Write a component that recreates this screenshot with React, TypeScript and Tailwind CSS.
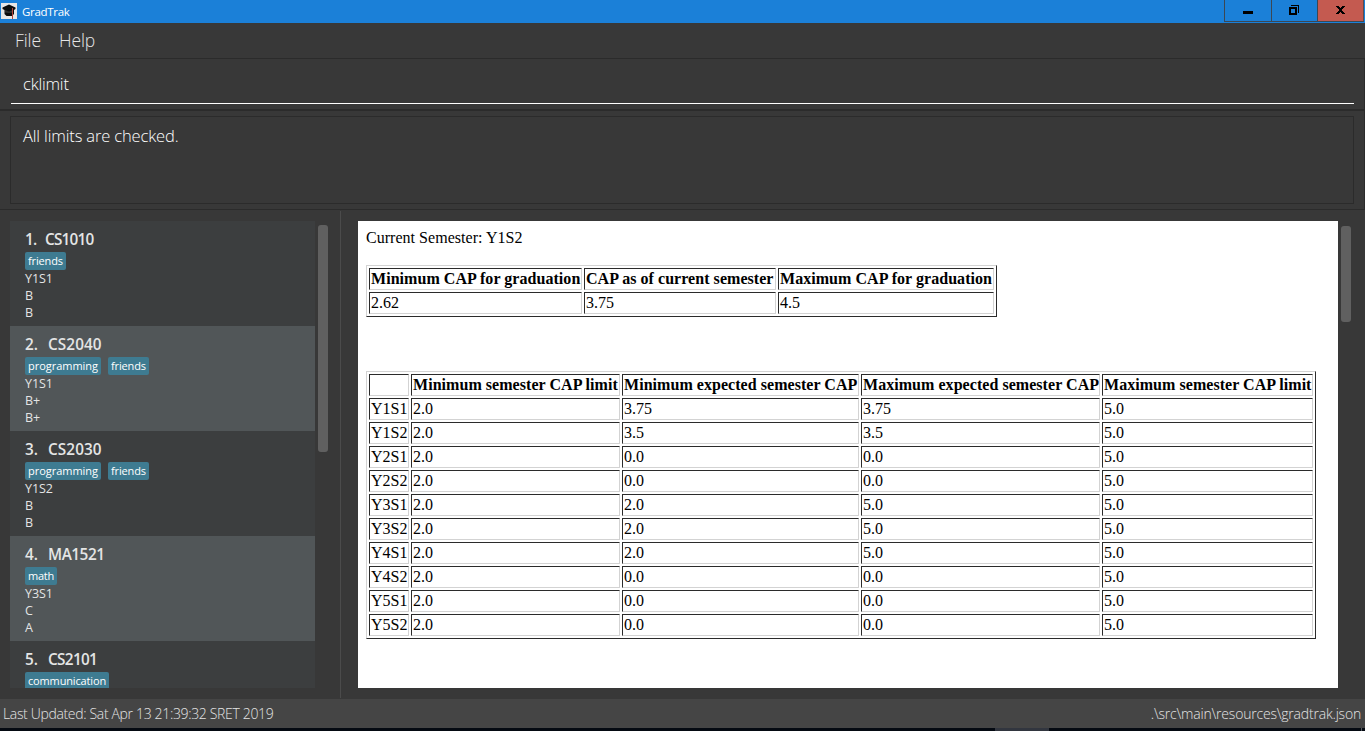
import React from "react";

type Module = { code: string; tags: string[]; lines: string[]; fit: string };

const modules: Module[] = [
  { code: "CS1010", tags: ["friends"], lines: ["Y1S1", "B", "B"], fit: "tracking-[-0.75px]" },
  { code: "CS2040", tags: ["programming", "friends"], lines: ["Y1S1", "B+", "B+"], fit: "tracking-[0.1px]" },
  { code: "CS2030", tags: ["programming", "friends"], lines: ["Y1S2", "B", "B"], fit: "tracking-[0.1px]" },
  { code: "MA1521", tags: ["math"], lines: ["Y3S1", "C", "A"], fit: "tracking-[-0.45px]" },
  { code: "CS2101", tags: ["communication"], lines: [], fit: "tracking-[-0.65px]" },
];

const tagFit: Record<string, string> = {
  friends: "w-[41px] tracking-[-0.14px]",
  programming: "w-[76px] tracking-[-0.03px]",
  math: "w-[32px] tracking-[-0.25px]",
  communication: "w-[84px] tracking-[-0.15px]",
};

const summaryHead = ["Minimum CAP for graduation", "CAP as of current semester", "Maximum CAP for graduation"];
const limitHead = [
  "",
  "Minimum semester CAP limit",
  "Minimum expected semester CAP",
  "Maximum expected semester CAP",
  "Maximum semester CAP limit",
];
const limitRows = [
  ["Y1S1", "2.0", "3.75", "3.75", "5.0"],
  ["Y1S2", "2.0", "3.5", "3.5", "5.0"],
  ["Y2S1", "2.0", "0.0", "0.0", "5.0"],
  ["Y2S2", "2.0", "0.0", "0.0", "5.0"],
  ["Y3S1", "2.0", "2.0", "5.0", "5.0"],
  ["Y3S2", "2.0", "2.0", "5.0", "5.0"],
  ["Y4S1", "2.0", "2.0", "5.0", "5.0"],
  ["Y4S2", "2.0", "0.0", "0.0", "5.0"],
  ["Y5S1", "2.0", "0.0", "0.0", "5.0"],
  ["Y5S2", "2.0", "0.0", "0.0", "5.0"],
];

const cell =
  "h-[22px] border border-t-[#2b2b2b] border-l-[#2b2b2b] border-r-[#d3d3d3] border-b-[#d3d3d3] p-px text-left leading-[18px] whitespace-nowrap";
const tableFrame =
  "table-fixed border-separate border-spacing-[2px] border border-t-[#d3d3d3] border-l-[#d3d3d3] border-r-[#2b2b2b] border-b-[#2b2b2b]";

function DataTable({ head, rows, cols, size }: { head: string[]; rows: string[][]; cols: string[]; size: string }) {
  return (
    <table className={`${tableFrame} ${size}`}>
      <colgroup>
        {cols.map((c, i) => (
          <col key={i} className={c} />
        ))}
      </colgroup>
      <tbody>
        <tr>
          {head.map((h, i) => (
            <th key={i} className={`${cell} font-bold tracking-[0.045px]`}>{h}</th>
          ))}
        </tr>
        {rows.map((r, i) => (
          <tr key={i}>
            {r.map((c, j) => (
              <td key={j} className={cell}>{c}</td>
            ))}
          </tr>
        ))}
      </tbody>
    </table>
  );
}

function TitleBar() {
  return (
    <header className="flex h-[23px] shrink-0 bg-[#1b80d8]">
      <svg className="mt-[3px] ml-px h-4 w-4" viewBox="0 0 16 16">
        <rect width="16" height="16" fill="#e8e6e6" />
        <path d="M8 1.5 L14.5 4.5 L14.5 6 L13 7 V11 L11 13 H5.5 L3.5 11 V7 L1.5 6 V4.5 Z" fill="#0c0c0c" />
        <path d="M4 7 L8 8.5 L12 7 V9.5 L8 10 L4 9.5Z" fill="#303030" />
        <path d="M11.5 5 V16" stroke="#b5453c" strokeWidth="1" />
      </svg>
      <span className="ml-[5px] text-[11.5px] leading-[24px] tracking-[-0.3px] text-white">GradTrak</span>
      <div className="mr-px ml-auto flex h-[22px] border-b border-l border-[#3b4754]">
        <div className="w-[47px] border-r border-[#3b4754]">
          <svg className="h-[21px] w-[46px]" viewBox="0 0 46 21" shapeRendering="crispEdges">
            <rect x="18" y="11" width="10" height="3" />
          </svg>
        </div>
        <div className="w-[46px] border-r border-[#3b4754]">
          <svg className="h-[21px] w-[45px]" viewBox="0 0 45 21" shapeRendering="crispEdges">
            <path d="M17 7h8v8h-8z M19 9v4h4v-4z" fillRule="evenodd" />
            <path d="M19 5h8v8h-1v-7h-7z" />
          </svg>
        </div>
        <div className="w-[46px] border-r border-[#5f4a4d] bg-[#c45a50]">
          <svg className="h-[21px] w-[45px]" viewBox="0 0 45 21" shapeRendering="crispEdges">
            <path d="M18 6h3v1h1v1h1v-1h1v-1h3v1h-1v1h-1v1h-1v2h1v1h1v1h1v1h-3v-1h-1v-1h-1v1h-1v1h-3v-1h1v-1h1v-1h1v-2h-1v-1h-1v-1h-1z" />
          </svg>
        </div>
      </div>
    </header>
  );
}

function ModuleCard({ module, index }: { module: Module; index: number }) {
  return (
    <li className={`h-[105px] shrink-0 px-[15px] pt-[7px] text-[#e4e5e5] ${index % 2 ? "bg-[#515658]" : "bg-[#3c3e3f]"}`}>
      <div className="flex h-[23px] text-[15.3px] leading-[23px] font-semibold">
        <span className={index === 0 ? "w-[20px] tracking-[-0.8px]" : "w-[23px]"}>{index + 1}.</span>
        <span className={module.fit}>{module.code}</span>
      </div>
      <div className="mt-px flex h-[18px] gap-[7px]">
        {module.tags.map((t) => (
          <span
            key={t}
            className={`h-[18px] rounded-[2px] bg-[#3e7b91] px-[3px] text-[11px] leading-[18px] whitespace-nowrap text-white ${tagFit[t]}`}
          >
            {t}
          </span>
        ))}
      </div>
      {module.lines.map((l, i) => (
        <div key={i} className="h-[17px] text-[12.5px] leading-[17px] tracking-[-0.1px]">{l}</div>
      ))}
    </li>
  );
}

export default function App() {
  return (
    <div className="flex h-[731px] w-[1365px] flex-col overflow-hidden bg-[#383838] font-['Open_Sans',sans-serif]">
      <TitleBar />
      <nav className="flex h-[35px] shrink-0 gap-[18px] pl-[15px] text-[17.5px] leading-[35px] font-light text-[#e6e6e6]">
        <span className="tracking-[-0.1px]">File</span>
        <span className="tracking-[-0.1px]">Help</span>
      </nav>
      <section className="h-[53px] shrink-0 border-t border-r border-b-2 border-[#2b2b2b] pr-[10px] pl-[11px]">
        <div className="h-[45px] border-b border-white pl-3 text-[16.5px] leading-[50px] font-light tracking-[-0.2px] text-white">cklimit</div>
      </section>
      <section className="h-[99px] shrink-0 border-r border-b border-[#2b2b2b] pt-[5px] pr-[10px] pl-[10px]">
        <div className="h-[88px] border border-[#2b2b2b] pl-3 text-[16.5px] leading-[38px] font-light tracking-[-0.14px] text-white">
          All limits are checked.
        </div>
      </section>
      <main className="flex h-[489px] shrink-0">
        <aside className="flex w-[340px] pt-[11px] pb-[11px] pl-[10px]">
          <ul className="flex w-[305px] flex-col overflow-hidden">
            {modules.map((m, i) => (
              <ModuleCard key={m.code} module={m} index={i} />
            ))}
          </ul>
          <div className="mt-1 ml-[3px] h-[227px] w-[10px] rounded-[3px] bg-[#606060]" />
        </aside>
        <div className="mt-px mb-px w-px bg-[#4b4b4b]" />
        <div className="flex pt-[11px] pl-[17px]">
          <article className="h-[467px] w-[980px] bg-white pt-[8px] pl-[8px] font-['Liberation_Serif',serif] text-[16px] text-black">
            <p className="mb-[18px] h-[18px] leading-[18px] tracking-[0.03px]">Current Semester: Y1S2</p>
            <DataTable head={summaryHead} rows={[["2.62", "3.75", "4.5"]]} cols={["w-[213px]", "w-[192px]", "w-[216px]"]} size="w-[631px]" />
            <div className="h-[54px]" />
            <DataTable
              head={limitHead}
              rows={limitRows}
              cols={["w-[40px]", "w-[209px]", "w-[237px]", "w-[239px]", "w-[211px]"]}
              size="w-[950px]"
            />
          </article>
          <div className="mt-[5px] ml-[3px] h-[96px] w-[10px] rounded-[3px] bg-[#606060]" />
        </div>
      </main>
      <footer className="flex h-[29px] shrink-0 justify-between bg-[#454545] pr-[4px] pl-[3px] text-[14px] leading-[29px] font-light text-[#e4e4e4]">
        <span className="tracking-[-0.34px]">Last Updated: Sat Apr 13 21:39:32 SRET 2019</span>
        <span className="tracking-[-0.2px]">.\src\main\resources\gradtrak.json</span>
      </footer>
      <div className="flex h-[3px] shrink-0 bg-[#050a12]">
        <div className="ml-[995px] w-[54px] bg-[#32363f]" />
        <div className="ml-[312px] w-px bg-[#555a60]" />
      </div>
    </div>
  );
}
